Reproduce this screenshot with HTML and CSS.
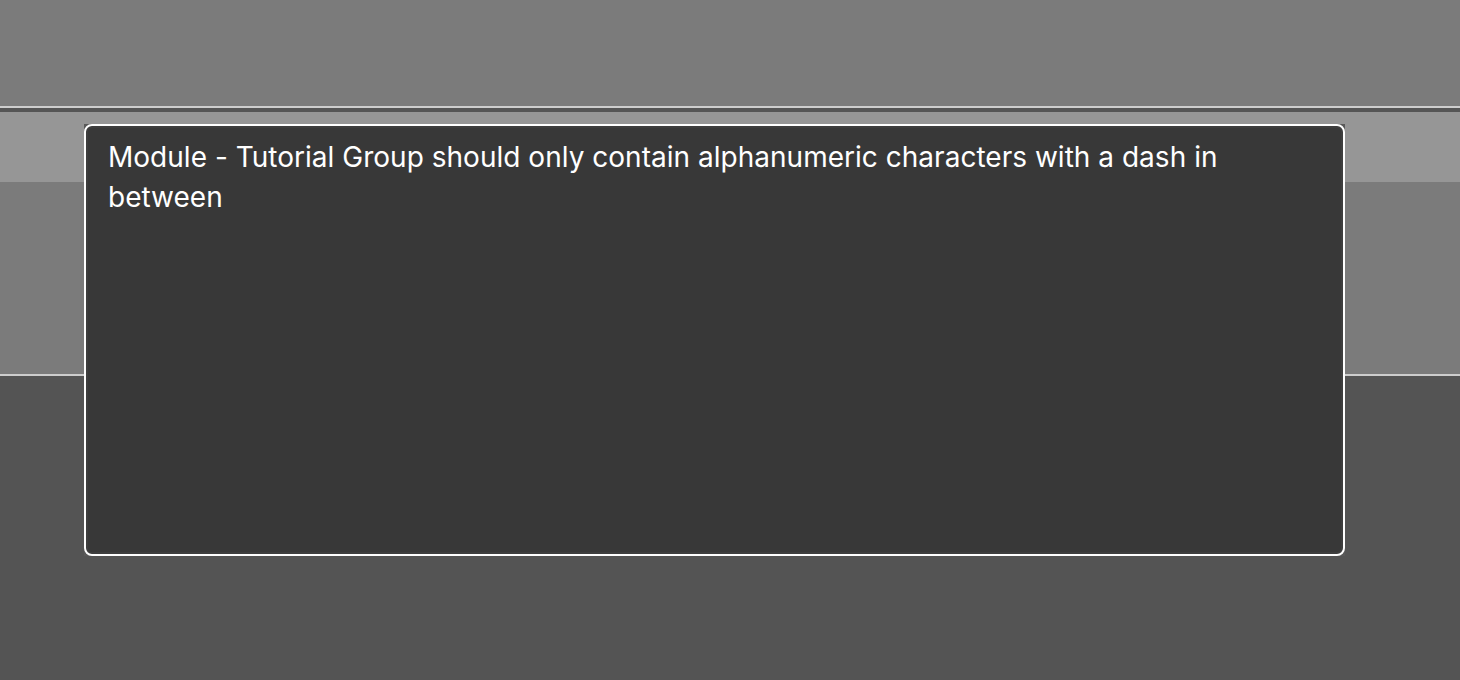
FILE: index.html
```html
<!DOCTYPE html>
<html>
<head>
<meta charset="utf-8">
<link rel="stylesheet" href="styles.css">
</head>
<body>
<div class="app">
  <div class="top"></div>
  <div class="line"></div>
  <div class="strip"></div>
  <div class="band"></div>
  <div class="mid"></div>
  <div class="line"></div>
  <div class="bottom"></div>
  <div class="dialog">
    <div class="dialog-inner">
      <p class="message">Module - Tutorial Group should only contain alphanumeric characters with a dash in between</p>
    </div>
  </div>
</div>
</body>
</html>
```
FILE: styles.css
```css
html, body {
  margin: 0;
  padding: 0;
}
body {
  font-family: Inter, Roboto, "Liberation Sans", sans-serif;
}
.app {
  position: relative;
  width: 1460px;
  height: 680px;
  display: flex;
  flex-direction: column;
  background: #545454;
  overflow: hidden;
}
.top {
  height: 106px;
  background: #7b7b7b;
}
.line {
  height: 2px;
  background: #cdcdcd;
}
.strip {
  height: 4px;
  background: #555555;
}
.band {
  height: 70px;
  background: #969696;
}
.mid {
  height: 192px;
  background: #7b7b7b;
}
.bottom {
  flex: 1;
  background: #545454;
}
.dialog {
  position: absolute;
  left: 84px;
  top: 124px;
  width: 1261px;
  height: 432px;
  background: #595959;
  box-sizing: border-box;
  display: flex;
}
.dialog-inner {
  flex: 1;
  border: 2px solid #ffffff;
  border-radius: 8px;
  background: #383838;
  box-shadow: inset 0 0 0 2px #3e3e3e;
  padding: 11px 22px 9px;
}
.message {
  margin: 0;
  color: #ffffff;
  font-size: 28px;
  line-height: 40px;
  letter-spacing: 0.02px;
}
```
